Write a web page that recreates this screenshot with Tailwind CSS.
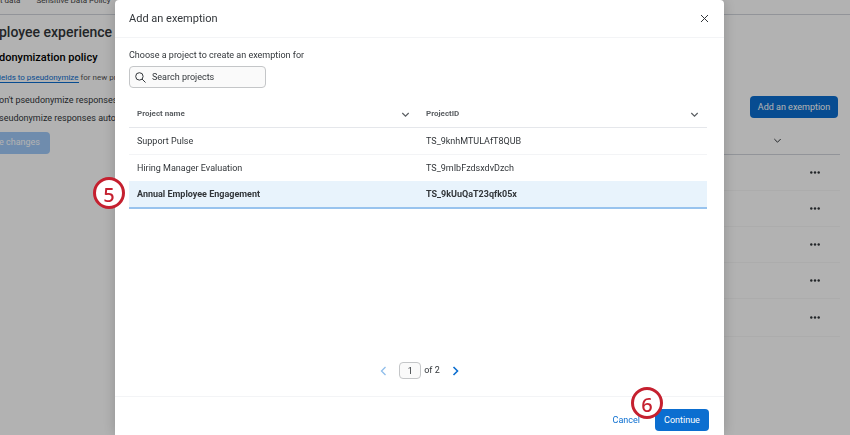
<!DOCTYPE html>
<html lang="en">
  <head>
    <meta charset="utf-8" />
    <title>Add an exemption</title>
    <script src="https://cdn.jsdelivr.net/npm/@tailwindcss/browser@4"></script>
  </head>

  <body class="h-screen overflow-hidden bg-white font-['Roboto',sans-serif] text-[9px] text-[#32363a]">
    <!-- Page behind the dialog -->
    <div class="h-full overflow-hidden whitespace-nowrap">
      <nav class="flex h-[15px] gap-4 border-b border-gray-300 text-[8px] leading-none text-[#444]">
        <a class="-mt-[3px]" href="#">t data</a>
        <a class="-mt-[3px]" href="#">Sensitive Data Policy</a>
      </nav>

      <main class="-ml-px flex justify-between">
        <div class="w-0 flex-1 overflow-hidden">
          <h1 class="mt-[7px] text-sm leading-5 font-medium">ployee experience (EX) pseudonymization policies</h1>
          <h2 class="mt-2 text-[11px] leading-4 font-medium text-black">donymization policy</h2>
          <p class="mt-[6px] text-[8px] leading-3 text-[#555]">
            <a class="border-b border-[#0b6ed0] text-[#0b6ed0]" href="#">ields to pseudonymize</a>
            for new projects
          </p>
          <p class="mt-[10px] leading-3">on't pseudonymize responses automatically</p>
          <p class="mt-[6px] leading-3">seudonymize responses automatically</p>
          <button class="mt-2 h-[22px] rounded-r-sm bg-[#9fc9f8] pr-[10px] text-white">e changes</button>
        </div>

        <div class="w-[200px] pt-[81px] pr-[10px]">
          <div class="flex justify-end pr-[2px]">
            <button class="h-[22px] w-[88px] rounded-sm bg-[#0b6ed0] pt-px text-white">Add an exemption</button>
          </div>
          <div class="mt-[9px] flex h-7 items-center justify-end border-b border-gray-300 pr-[58px]">
            <svg class="size-[9px]" viewBox="0 0 9 9" fill="none" stroke="currentColor"><path d="M1.3 3l3.2 3.2L7.7 3" /></svg>
          </div>
          <div class="flex h-9 items-center justify-end border-b border-[#f6f6f6] pr-5">
            <button aria-label="More actions"><svg class="h-[3px] w-[10px]" viewBox="0 0 10 3" fill="currentColor"><circle cx="1.3" cy="1.5" r="1.2" /><circle cx="5" cy="1.5" r="1.2" /><circle cx="8.7" cy="1.5" r="1.2" /></svg></button>
          </div>
          <div class="flex h-9 items-center justify-end border-b border-[#f6f6f6] pr-5">
            <button aria-label="More actions"><svg class="h-[3px] w-[10px]" viewBox="0 0 10 3" fill="currentColor"><circle cx="1.3" cy="1.5" r="1.2" /><circle cx="5" cy="1.5" r="1.2" /><circle cx="8.7" cy="1.5" r="1.2" /></svg></button>
          </div>
          <div class="flex h-9 items-center justify-end border-b border-[#f6f6f6] pr-5">
            <button aria-label="More actions"><svg class="h-[3px] w-[10px]" viewBox="0 0 10 3" fill="currentColor"><circle cx="1.3" cy="1.5" r="1.2" /><circle cx="5" cy="1.5" r="1.2" /><circle cx="8.7" cy="1.5" r="1.2" /></svg></button>
          </div>
          <div class="flex h-9 items-center justify-end border-b border-[#f6f6f6] pr-5">
            <button aria-label="More actions"><svg class="h-[3px] w-[10px]" viewBox="0 0 10 3" fill="currentColor"><circle cx="1.3" cy="1.5" r="1.2" /><circle cx="5" cy="1.5" r="1.2" /><circle cx="8.7" cy="1.5" r="1.2" /></svg></button>
          </div>
          <div class="flex h-[38px] items-center justify-end border-b border-[#f6f6f6] pr-5">
            <button aria-label="More actions"><svg class="h-[3px] w-[10px]" viewBox="0 0 10 3" fill="currentColor"><circle cx="1.3" cy="1.5" r="1.2" /><circle cx="5" cy="1.5" r="1.2" /><circle cx="8.7" cy="1.5" r="1.2" /></svg></button>
          </div>
        </div>
      </main>
    </div>

    <!-- Dialog -->
    <div class="fixed inset-0 bg-black/30 pr-[126px] pl-[115px]">
      <div class="flex h-full flex-col rounded-t-sm bg-white shadow-[0_0_14px_rgba(0,0,0,0.2)]" role="dialog" aria-labelledby="dialogTitle">
        <header class="flex h-[38px] items-center justify-between border-b border-gray-100 pr-[15px] pl-[14px]">
          <h2 id="dialogTitle" class="pt-px text-[11px]">Add an exemption</h2>
          <button aria-label="Close">
            <svg class="size-[9px]" viewBox="0 0 9 9" fill="none" stroke="currentColor"><path d="M1 1l7 7M8 1l-7 7" /></svg>
          </button>
        </header>

        <div class="flex flex-1 flex-col pt-[11px] pr-[17px] pl-[14px]">
          <label class="leading-3" for="search">Choose a project to create an exemption for</label>
          <div class="mt-[5px] flex h-[22px] w-[137px] items-center gap-[6px] rounded-sm border border-[#c4c6c8] bg-[#fafafa] px-[5px]">
            <svg class="size-[11px] shrink-0" viewBox="0 0 11 11" fill="none" stroke="currentColor"><circle cx="4.4" cy="4.4" r="3.7" /><path d="M7.1 7.1l3.4 3.4" /></svg>
            <input id="search" class="w-full pt-px outline-none placeholder:text-[#32363a]" type="text" placeholder="Search projects" />
          </div>

          <table class="mt-3 w-full table-fixed text-left">
            <thead>
              <tr class="h-[27px] border-b border-gray-200 text-[8px] text-[#5a5e62]">
                <th class="px-2 pt-[2px] font-bold">
                  <div class="flex items-center justify-between">
                    Project name
                    <svg class="size-[9px]" viewBox="0 0 9 9" fill="none" stroke="currentColor" stroke-width="1.2"><path d="M1.3 3l3.2 3.2L7.7 3" /></svg>
                  </div>
                </th>
                <th class="px-2 pt-[2px] font-bold">
                  <div class="flex items-center justify-between">
                    ProjectID
                    <svg class="size-[9px]" viewBox="0 0 9 9" fill="none" stroke="currentColor" stroke-width="1.2"><path d="M1.3 3l3.2 3.2L7.7 3" /></svg>
                  </div>
                </th>
              </tr>
            </thead>
            <tbody>
              <tr class="h-[27px] border-b border-gray-100">
                <td class="px-2 pt-[2px]">Support Pulse</td>
                <td class="px-2 pt-[2px]">TS_9knhMTULAfT8QUB</td>
              </tr>
              <tr class="h-[27px]">
                <td class="px-2 pt-[2px]">Hiring Manager Evaluation</td>
                <td class="px-2 pt-[2px]">TS_9mIbFzdsxdvDzch</td>
              </tr>
              <tr class="h-[27px] border-b-2 border-[#98c3ee] bg-[#e8f3fc] font-bold">
                <td class="relative px-2 pt-[2px]">
                  Annual Employee Engagement
                  <span class="absolute -top-1 -left-9 flex size-8 items-center justify-center rounded-full border-[3px] border-[#c5202f] bg-white pt-[3px] font-['Noto_Sans',sans-serif] text-xl font-medium text-[#c5202f]">5</span>
                </td>
                <td class="px-2 pt-[2px]">TS_9kUuQaT23qfk05x</td>
              </tr>
            </tbody>
          </table>

          <div class="mt-auto mb-[17px] flex items-center justify-center pl-[3px]">
            <button class="text-[#8fbdea]" aria-label="Previous page">
              <svg class="h-[10px] w-[7px]" viewBox="0 0 7 10" fill="none" stroke="currentColor" stroke-width="1.3"><path d="M5.5 1L1.5 5l4 4" /></svg>
            </button>
            <input class="ml-3 h-[17px] w-[22px] rounded-sm border border-[#c4c6c8] bg-[#fafafa] text-center" type="text" value="1" aria-label="Page" />
            <span class="ml-[3px] pt-px">of 2</span>
            <button class="ml-3 text-[#0b6ed0]" aria-label="Next page">
              <svg class="h-[10px] w-[7px]" viewBox="0 0 7 10" fill="none" stroke="currentColor" stroke-width="1.6"><path d="M1.5 1l4 4-4 4" /></svg>
            </button>
          </div>
        </div>

        <footer class="flex h-[39px] items-center justify-end gap-[15px] border-t border-gray-100 pt-2 pr-[15px]">
          <button class="pt-px text-[#0b6ed0]">Cancel</button>
          <button class="relative h-[22px] w-[54px] rounded-sm bg-[#0b6ed0] pt-px text-white">
            Continue
            <span class="absolute -top-[22px] -left-6 flex size-8 items-center justify-center rounded-full border-[3px] border-[#c5202f] bg-white pt-[3px] font-['Noto_Sans',sans-serif] text-xl font-medium text-[#c5202f]">6</span>
          </button>
        </footer>
      </div>
    </div>
  </body>
</html>
